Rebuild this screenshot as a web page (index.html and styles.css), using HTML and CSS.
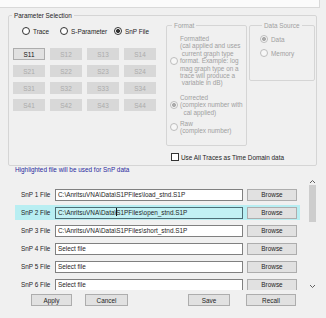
FILE: index.html
```html
<!DOCTYPE html>
<html lang="en">
<head>
    <meta charset="UTF-8">
    <title>SnP File Selection</title>
    <link rel="stylesheet" href="styles.css">
</head>
<body>
    <div class="top-strip"></div>

    <fieldset class="group params">
        <legend>Parameter Selection</legend>
        <div class="param-body">
            <div class="left-col">
                <div class="mode-row">
                    <label class="opt trace"><span class="radio"></span>Trace</label>
                    <label class="opt sparam"><span class="radio"></span>S-Parameter</label>
                    <label class="opt snp"><span class="radio on"></span>SnP File</label>
                </div>
                <div class="s-grid">
                    <button class="s-btn active">S11</button>
                    <button class="s-btn">S12</button>
                    <button class="s-btn">S13</button>
                    <button class="s-btn">S14</button>
                    <button class="s-btn">S21</button>
                    <button class="s-btn">S22</button>
                    <button class="s-btn">S23</button>
                    <button class="s-btn">S24</button>
                    <button class="s-btn">S31</button>
                    <button class="s-btn">S32</button>
                    <button class="s-btn">S33</button>
                    <button class="s-btn">S34</button>
                    <button class="s-btn">S41</button>
                    <button class="s-btn">S42</button>
                    <button class="s-btn">S43</button>
                    <button class="s-btn">S44</button>
                </div>
            </div>

            <fieldset class="group format disabled">
                <legend>Format</legend>
                <label class="opt-block">
                    <span class="radio"></span>
                    <span class="opt-text">Formatted<br>(cal applied and uses<br>&nbsp;current graph type<br>format. Example: log<br>mag graph type on a<br>trace will produce a<br>&nbsp;variable in dB)</span>
                </label>
                <label class="opt-block corrected">
                    <span class="radio on"></span>
                    <span class="opt-text">Corrected<br>(complex number with<br>&nbsp;&nbsp;cal applied)</span>
                </label>
                <label class="opt-block raw">
                    <span class="radio"></span>
                    <span class="opt-text">Raw<br>(complex number)</span>
                </label>
            </fieldset>

            <fieldset class="group source disabled">
                <legend>Data Source</legend>
                <label class="opt"><span class="radio on"></span>Data</label>
                <label class="opt memory"><span class="radio"></span>Memory</label>
            </fieldset>
        </div>
        <label class="check-row"><span class="checkbox"></span>Use All Traces as Time Domain data</label>
    </fieldset>

    <div class="note">Highlighted file will be used for SnP data</div>

    <div class="file-panel">
        <div class="file-list">
            <div class="file-row">
                <span class="file-label">SnP 1 File</span>
                <div class="file-input">C:\AnritsuVNA\Data\S1PFiles\load_stnd.S1P</div>
                <button class="btn browse">Browse</button>
            </div>
            <div class="file-row current">
                <span class="file-label">SnP 2 File</span>
                <div class="file-input">C:\AnritsuVNA\Data\<span class="caret"></span>S1PFiles\open_stnd.S1P</div>
                <button class="btn browse">Browse</button>
            </div>
            <div class="file-row">
                <span class="file-label">SnP 3 File</span>
                <div class="file-input">C:\AnritsuVNA\Data\S1PFiles\short_stnd.S1P</div>
                <button class="btn browse">Browse</button>
            </div>
            <div class="file-row">
                <span class="file-label">SnP 4 File</span>
                <div class="file-input">Select file</div>
                <button class="btn browse">Browse</button>
            </div>
            <div class="file-row">
                <span class="file-label">SnP 5 File</span>
                <div class="file-input">Select file</div>
                <button class="btn browse">Browse</button>
            </div>
            <div class="file-row">
                <span class="file-label">SnP 6 File</span>
                <div class="file-input">Select file</div>
                <button class="btn browse">Browse</button>
            </div>
        </div>
        <div class="scrollbar">
            <div class="arrow">
                <svg width="7" height="5" viewBox="0 0 7 5"><polyline points="1,4 3.5,1.5 6,4" fill="none" stroke="#606060" stroke-width="1"/></svg>
            </div>
            <div class="track"><div class="thumb"></div></div>
            <div class="arrow">
                <svg width="7" height="5" viewBox="0 0 7 5"><polyline points="1,1 3.5,3.5 6,1" fill="none" stroke="#606060" stroke-width="1"/></svg>
            </div>
        </div>
    </div>

    <div class="actions">
        <button class="btn apply">Apply</button>
        <button class="btn cancel">Cancel</button>
        <button class="btn save">Save</button>
        <button class="btn recall">Recall</button>
    </div>
</body>
</html>
```

FILE: styles.css
```css
body {
    margin: 0;
    width: 326px;
    height: 318px;
    overflow: hidden;
    background-color: #f0f0f0;
    font-family: "Liberation Sans", Arial, sans-serif;
    font-size: 6.4px;
    color: #1e1e1e;
}
button {
    font: inherit;
    padding: 0;
    margin: 0;
}
.top-strip {
    width: 319px;
    height: 7px;
    background-color: #fbfbfb;
    border-right: 1px solid #d9d9d9;
    border-bottom: 1px solid #d9d9d9;
}

/* group boxes */
.group {
    border: 1px solid #d5d5d5;
    border-radius: 2px;
    margin: 0;
    padding: 0;
    min-width: 0;
    box-sizing: border-box;
}
.group legend {
    padding: 0 2px;
    margin-left: 2px;
    line-height: 7px;
}
.params {
    margin: 4px 0 0 8px;
    width: 309px;
    padding-bottom: 4px;
}
.params > legend { margin-left: 3px; }
.param-body {
    display: flex;
    align-items: flex-start;
    padding-left: 4px;
}
.left-col { width: 143px; }

/* radios */
.radio {
    display: inline-block;
    flex: none;
    width: 8px;
    height: 8px;
    border: 1px solid #333;
    border-radius: 50%;
    background: #fff;
    box-sizing: border-box;
}
.radio.on { background: radial-gradient(circle, #333 0 1.7px, #fff 2.3px); }
.disabled { color: #a0a0a0; }
.disabled .radio { border-color: #bdbdbd; background: #f7f7f7; }
.disabled .radio.on { background: radial-gradient(circle, #ababab 0 1.7px, #f7f7f7 2.3px); }

.opt {
    display: flex;
    align-items: center;
    gap: 3px;
    white-space: nowrap;
}
.mode-row {
    display: flex;
    align-items: center;
    height: 8px;
    margin-top: 8px;
    padding-left: 9px;
}
.trace { width: 38px; }
.sparam { width: 54px; }

.s-grid {
    display: grid;
    grid-template-columns: repeat(4, 32px);
    grid-auto-rows: 12px;
    gap: 5px;
    margin-top: 13px;
}
.s-btn {
    border: 1px solid transparent;
    background-color: #d8d8d8;
    color: #ababab;
}
.s-btn.active {
    background-color: #e1e1e1;
    border-color: #adadad;
    color: #111;
}

/* format group */
.format {
    width: 81px;
    height: 124px;
    margin: 3px 0 0 10px;
    padding: 6px 0 0 3px;
}
.opt-block {
    display: flex;
    align-items: center;
    gap: 2px;
    white-space: nowrap;
}
.opt-text { line-height: 7.4px; }
.corrected { margin-top: 7px; }
.raw { margin-top: 4px; }

.source {
    width: 66px;
    height: 59px;
    margin: 3px 0 0 2px;
    padding: 6px 0 0 10px;
}
.memory { margin-top: 6px; }

.check-row {
    display: flex;
    align-items: center;
    gap: 2px;
    height: 8px;
    margin: 7px 0 0 162px;
}
.checkbox {
    width: 8px;
    height: 8px;
    border: 1px solid #333;
    background: #fff;
    box-sizing: border-box;
}

.note {
    color: #2a2a9e;
    padding-left: 15px;
    line-height: 7px;
}

/* file list */
.file-panel {
    display: flex;
    width: 319px;
    height: 113px;
    margin-top: 4px;
    overflow: hidden;
}
.file-list {
    width: 306px;
    padding-top: 10px;
}
.file-row {
    display: flex;
    align-items: center;
    width: 285px;
    height: 15px;
    margin: 0 0 3px 15px;
    padding-left: 6px;
    box-sizing: border-box;
}
.file-row.current { background-color: #b8eef2; }
.file-label {
    width: 34px;
    white-space: nowrap;
}
.file-input {
    width: 188px;
    height: 12px;
    border: 1px solid #808080;
    background-color: #fff;
    padding-left: 2px;
    line-height: 10px;
    box-sizing: border-box;
    white-space: nowrap;
    overflow: hidden;
}
.current .file-input {
    background-color: #c2f1f4;
    border-color: #4d6e76;
}
.caret {
    display: inline-block;
    height: 8px;
    border-left: 1px solid #111;
    margin-right: -1px;
    vertical-align: -1px;
}
.btn {
    height: 12px;
    border: 1px solid #adadad;
    background-color: #e1e1e1;
    color: #1e1e1e;
}
.browse {
    width: 50px;
    margin-left: 4px;
}

.scrollbar {
    width: 13px;
    display: flex;
    flex-direction: column;
    align-items: center;
}
.arrow {
    height: 8px;
    display: flex;
    align-items: center;
    justify-content: center;
}
.track {
    flex: 1;
    width: 100%;
    display: flex;
    justify-content: center;
}
.thumb {
    width: 7px;
    height: 37px;
    background-color: #cdcdcd;
}

.actions {
    display: flex;
    margin-top: 4px;
    padding-left: 31px;
}
.apply { width: 41px; }
.cancel { width: 43px; margin-left: 13px; }
.save { width: 42px; margin-left: 60px; }
.recall { width: 50px; margin-left: 16px; }
```
